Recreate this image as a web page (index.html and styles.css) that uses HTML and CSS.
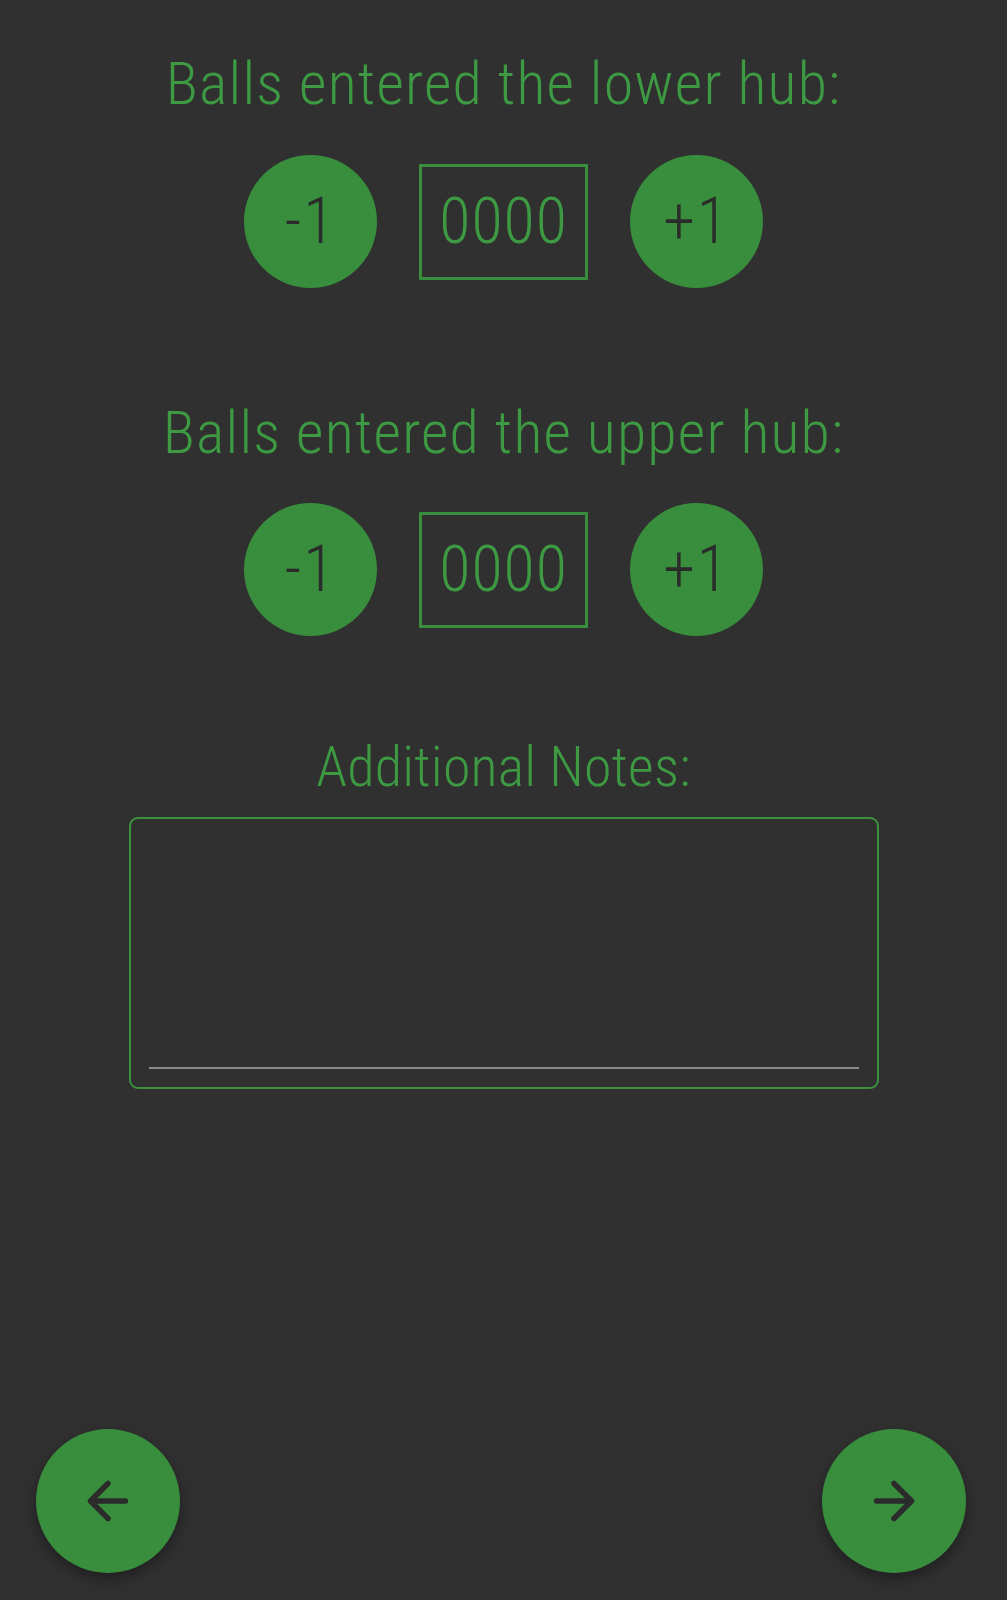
FILE: index.html
```html
<!DOCTYPE html>
<html lang="en">
<head>
<meta charset="utf-8">
<title>Scouting</title>
<link rel="stylesheet" href="styles.css">
</head>
<body>
<main class="page">
  <section class="group">
    <h2 class="label">Balls entered the lower hub:</h2>
    <div class="counter">
      <button class="round">-1</button>
      <div class="value">0000</div>
      <button class="round">+1</button>
    </div>
  </section>
  <section class="group second">
    <h2 class="label">Balls entered the upper hub:</h2>
    <div class="counter">
      <button class="round">-1</button>
      <div class="value">0000</div>
      <button class="round">+1</button>
    </div>
  </section>
  <section class="notes">
    <h2 class="label small">Additional Notes:</h2>
    <div class="notes-box">
      <div class="notes-line"></div>
    </div>
  </section>
</main>
<button class="fab fab-left" aria-label="Back">
  <svg viewBox="0 0 24 24" width="60" height="60"><path d="M19 12H5M12 5l-7 7 7 7" fill="none" stroke="#2b2b2b" stroke-width="2.2" stroke-linecap="round" stroke-linejoin="round"/></svg>
</button>
<button class="fab fab-right" aria-label="Next">
  <svg viewBox="0 0 24 24" width="60" height="60"><path d="M5 12h14M12 5l7 7-7 7" fill="none" stroke="#2b2b2b" stroke-width="2.2" stroke-linecap="round" stroke-linejoin="round"/></svg>
</button>
</body>
</html>
```
FILE: styles.css
```css
html, body {
  margin: 0;
  padding: 0;
  background: #303030;
  height: 100%;
}
body {
  font-family: "Roboto", sans-serif;
  font-stretch: 82%;
  font-weight: 300;
}
.page {
  display: flex;
  flex-direction: column;
  align-items: center;
  padding-top: 47px;
}
.group {
  display: flex;
  flex-direction: column;
  align-items: center;
  gap: 34px;
}
.group.second {
  margin-top: 108px;
}
.group.second .counter {
  margin-top: -1px;
}
.label {
  margin: 0;
  font-weight: 300;
  font-size: 60px;
  line-height: 74px;
  letter-spacing: 1.2px;
  color: #3d9a42;
  white-space: nowrap;
}
.label.small {
  font-size: 56px;
  line-height: 68px;
  letter-spacing: 0.2px;
}
.counter {
  display: flex;
  align-items: center;
  gap: 42px;
}
.round {
  width: 133px;
  height: 133px;
  border-radius: 50%;
  border: none;
  background: #388e3c;
  color: #2b2b2b;
  font-family: inherit;
  font-stretch: 85%;
  font-size: 64px;
  font-weight: 300;
  letter-spacing: 2px;
  padding: 0;
  display: flex;
  align-items: center;
  justify-content: center;
}
.value {
  width: 163px;
  height: 110px;
  border: 3px solid #388e3c;
  color: #3d9a42;
  font-size: 64px;
  font-stretch: 78%;
  letter-spacing: 1px;
  display: flex;
  align-items: center;
  justify-content: center;
}
.notes {
  margin-top: 97px;
  display: flex;
  flex-direction: column;
  align-items: center;
  gap: 16px;
}
.notes-box {
  width: 750px;
  height: 272px;
  border: 2px solid #3a923e;
  border-radius: 9px;
  display: flex;
  flex-direction: column;
  justify-content: flex-end;
  padding: 0 18px 18px 18px;
  box-sizing: border-box;
}
.notes-line {
  height: 2px;
  background: #8a8a8a;
}
.fab {
  position: fixed;
  bottom: 27px;
  width: 144px;
  height: 144px;
  border-radius: 50%;
  border: none;
  background: #388e3c;
  padding: 0;
  display: flex;
  align-items: center;
  justify-content: center;
  box-shadow: 0 6px 14px rgba(0,0,0,0.35);
}
.fab-left { left: 36px; }
.fab-right { right: 41px; }
```
